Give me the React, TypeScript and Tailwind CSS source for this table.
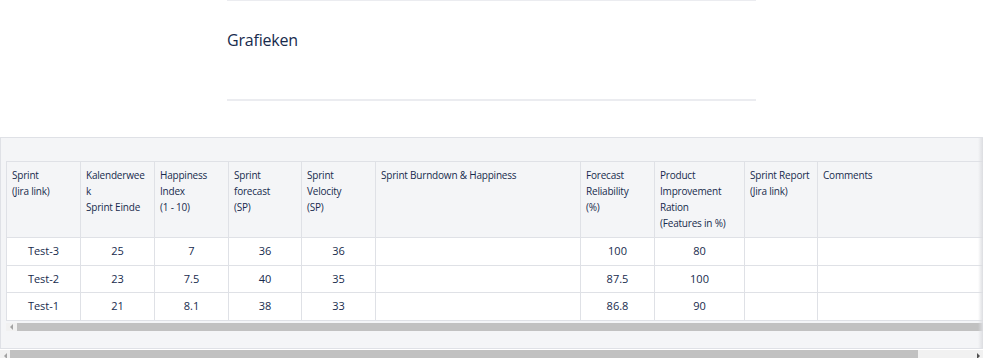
import React from "react";

const headers: string[][] = [
  ["Sprint", "(Jira link)"],
  ["Kalenderwee", "k", "Sprint Einde"],
  ["Happiness", "Index", "(1 - 10)"],
  ["Sprint", "forecast", "(SP)"],
  ["Sprint", "Velocity", "(SP)"],
  ["Sprint Burndown & Happiness"],
  ["Forecast", "Reliability", "(%)"],
  ["Product", "Improvement", "Ration", "(Features in %)"],
  ["Sprint Report", "(Jira link)"],
  ["Comments"],
];

const widths = [74, 74, 74, 73, 74, 205, 74, 90, 73, 220];

const rows: { h: string; cells: string[] }[] = [
  { h: "h-[28px]", cells: ["Test-3", "25", "7", "36", "36", "", "100", "80", "", ""] },
  { h: "h-[27px]", cells: ["Test-2", "23", "7.5", "40", "35", "", "87.5", "100", "", ""] },
  { h: "h-[28px]", cells: ["Test-1", "21", "8.1", "38", "33", "", "86.8", "90", "", ""] },
];

export default function App() {
  return (
    <div
      className="w-[999px] h-[358px] bg-white overflow-hidden text-[#172b4d]"
      style={{ fontFamily: '"Open Sans", "Noto Sans", sans-serif' }}
    >
      <div className="ml-[227px] w-[529px]">
        <div className="h-[1px] bg-[#ebecf0]" />
        <div className="h-[98px] flex items-start">
          <h2 className="mt-[28px] text-[16px] leading-[22px] font-normal tracking-[-0.2px]">Grafieken</h2>
        </div>
        <div className="h-[2px] bg-[#ebecf0]" />
      </div>

      <div className="mt-[36px] h-[212px] w-[983px] relative bg-[#f4f5f7] border-t border-b border-l border-[#dfe1e6]">
        <div className="pt-[23px] pl-[5px]">
          <div className="overflow-hidden w-[977px]">
            <table className="border-collapse table-fixed" style={{ width: widths.reduce((a, b) => a + b, 0) }}>
              <colgroup>
                {widths.map((w, i) => (
                  <col key={i} style={{ width: w }} />
                ))}
              </colgroup>
              <thead>
                <tr>
                  {headers.map((h, i) => (
                    <th
                      key={i}
                      className="h-[76px] align-top text-left font-normal text-[10px] tracking-[-0.2px] leading-[16px] px-[5px] pt-[5px] border border-[#dfe1e6] bg-[#f4f5f7] whitespace-nowrap"
                    >
                      {h.map((line, j) => (
                        <div key={j}>{line}</div>
                      ))}
                    </th>
                  ))}
                </tr>
              </thead>
              <tbody>
                {rows.map((r, i) => (
                  <tr key={i}>
                    {r.cells.map((c, j) => (
                      <td
                        key={j}
                        className={`${r.h} bg-white text-center text-[11px] border border-[#dfe1e6] font-medium p-0`}
                      >
                        {c}
                      </td>
                    ))}
                  </tr>
                ))}
              </tbody>
            </table>
          </div>
          <div className="mt-[2px] h-[8px] w-[977px] flex items-stretch bg-[#f1f1f1]">
            <div className="w-[11px] flex items-center justify-center">
              <div className="w-0 h-0 border-y-[3px] border-y-transparent border-r-[3px] border-r-[#a3a3a3]" />
            </div>
            <div className="flex-1 bg-[#c1c1c1]" />
          </div>
        </div>
        <div className="absolute top-0 right-0 bottom-0 w-[5px] bg-gradient-to-r from-transparent to-[#dcdde1]" />
      </div>
      <div className="w-[983px] h-[11px] mt-[1px] bg-[#f1f1f1] flex items-stretch">
        <div className="w-[10px] flex items-center justify-center">
          <div className="w-0 h-0 border-y-[3px] border-y-transparent border-r-[3px] border-r-[#a3a3a3]" />
        </div>
        <div className="w-[908px] bg-[#c1c1c1]" />
        <div className="flex-1" />
        <div className="w-[10px] flex items-center justify-center">
          <div className="w-0 h-0 border-y-[3px] border-y-transparent border-l-[3px] border-l-[#505050]" />
        </div>
      </div>
    </div>
  );
}
